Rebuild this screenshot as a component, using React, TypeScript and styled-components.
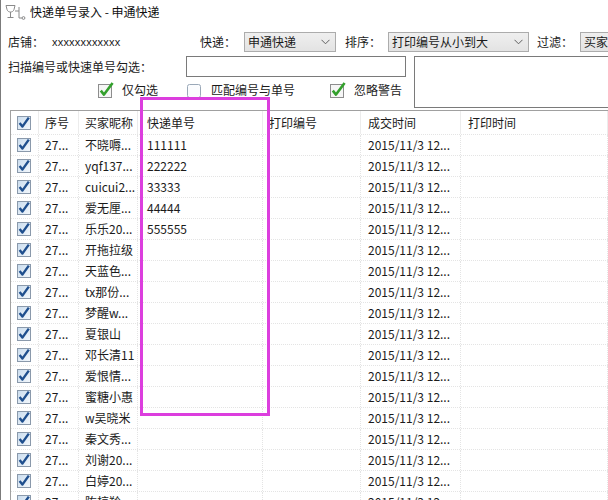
import React from 'react';
import styled, { createGlobalStyle } from 'styled-components';

const GlobalStyle = createGlobalStyle`
  html, body {
    margin: 0;
    padding: 0;
    background: #ffffff;
    overflow: hidden;
  }
  body {
    font-family: "Noto Sans CJK SC", "Microsoft YaHei", sans-serif;
    font-size: 12px;
    color: #1b1b1b;
  }
`;

// Window frame
const Window = styled.div`
  position: relative;
  width: 608px;
  height: 500px;
  box-sizing: border-box;
  border-left: 1px solid #7b7b7b;
  background: #ffffff;
  overflow: hidden;
  display: flex;
  flex-direction: column;
`;

const TitleBar = styled.div`
  height: 24px;
  flex-shrink: 0;
  padding: 0 0 0 2px;
  margin-bottom: 4px;
  display: flex;
  align-items: center;
  gap: 3px;
  font-size: 12px;
  color: #111;
`;

const TitleText = styled.span`
  line-height: 16px;
`;

// Form rows
const FormRow = styled.div`
  height: 28px;
  flex-shrink: 0;
  padding-left: 7px;
  display: flex;
  align-items: center;
  white-space: nowrap;
`;

const ShopGroup = styled.div`
  width: 192px;
  flex-shrink: 0;
  display: flex;
  align-items: center;
`;

const Label = styled.span<{ $width?: number }>`
  display: inline-block;
  flex-shrink: 0;
  width: ${p => (p.$width ? `${p.$width}px` : 'auto')};
  line-height: 16px;
`;

const ShopValue = styled.span`
  margin-left: 8px;
  font-family: "Liberation Sans", sans-serif;
  font-size: 11px;
  letter-spacing: 0.2px;
`;

const Select = styled.div<{ $width: number; $gap?: number }>`
  width: ${p => p.$width}px;
  margin-right: ${p => p.$gap ?? 0}px;
  flex-shrink: 0;
  height: 20px;
  box-sizing: border-box;
  border: 1px solid #acacac;
  background: linear-gradient(#efefef, #e3e3e3);
  display: flex;
  align-items: center;
  padding: 0 5px 0 3px;
  justify-content: space-between;
  line-height: 16px;
`;

const Chevron = styled.svg`
  width: 9px;
  height: 6px;
  flex-shrink: 0;
`;

const FormBody = styled.div`
  display: flex;
  height: 54px;
  flex-shrink: 0;
`;

const FormLeft = styled.div`
  width: 405px;
  flex-shrink: 0;
  padding-left: 7px;
  box-sizing: border-box;
  display: flex;
  flex-direction: column;
`;

const ScanRow = styled.div`
  display: flex;
  align-items: center;
  height: 21px;
`;

const ScanInput = styled.div`
  margin-left: 1px;
  width: 225px;
  height: 21px;
  box-sizing: border-box;
  border: 1px solid #7a7a7a;
  background: #fff;
`;

const OptionRow = styled.div`
  display: flex;
  align-items: center;
  height: 24px;
  margin-top: 1px;
  padding-left: 90px;
`;

const Option = styled.label<{ $width: number }>`
  width: ${p => p.$width}px;
  flex-shrink: 0;
  display: flex;
  align-items: center;
  gap: 8px;
  line-height: 16px;
`;

const MemoBox = styled.div`
  margin-left: 8px;
  flex: 1;
  height: 52px;
  margin-right: -4px;
  box-sizing: border-box;
  border: 1px solid #7a7a7a;
  background: #fff;
`;

// Table
const Table = styled.div`
  margin-left: 9px;
  flex: 1;
  border-top: 1px solid #a0a0a0;
  border-left: 1px solid #a0a0a0;
  background: #fff;
`;

const columns = '28px 40px 59px 125px 98px 100px 1fr';

const HeaderRow = styled.div`
  display: grid;
  grid-template-columns: ${columns};
  height: 23px;
`;

const HeaderCell = styled.div<{ $pad?: number }>`
  display: flex;
  align-items: center;
  padding-left: ${p => p.$pad ?? 6}px;
  border-right: 1px solid #ececec;
  line-height: 16px;
  overflow: hidden;
  white-space: nowrap;
`;

const BodyRow = styled.div`
  display: grid;
  grid-template-columns: ${columns};
  height: 21px;
  box-sizing: border-box;
  border-top: 1px dotted #e4e4e4;
`;

const Cell = styled.div<{ $pad?: number }>`
  display: flex;
  align-items: center;
  padding-left: ${p => p.$pad ?? 6}px;
  border-right: 1px dotted #e4e4e4;
  line-height: 16px;
  overflow: hidden;
  white-space: nowrap;
`;

// Annotation drawn over the screenshot
const Highlight = styled.div`
  position: absolute;
  left: 139px;
  top: 97px;
  width: 130px;
  height: 319px;
  box-sizing: border-box;
  border: 3px solid #dc3ede;
  pointer-events: none;
`;

const AppIcon = () => (
  <svg width="24" height="18" viewBox="0 0 24 18" fill="none" stroke="#8a8a8a" strokeWidth="1">
    <path d="M3 2.5 h9 l-1 4 c-0.5 1.8 -2 2.5 -3.5 2.5 c-1.5 0 -3 -0.7 -3.5 -2.5 z" />
    <path d="M7.5 9 v5" />
    <path d="M4.5 14.5 h6" />
    <path d="M12 8 h4 v7 h3" />
    <circle cx="20.5" cy="15" r="1.4" />
    <path d="M16 4 v4" />
  </svg>
);

const ChevronIcon = () => (
  <Chevron viewBox="0 0 9 6">
    <path d="M0.5 0.8 L4.5 4.8 L8.5 0.8" fill="none" stroke="#606060" strokeWidth="1" />
  </Chevron>
);

const GridCheck = () => (
  <svg width="14" height="14" viewBox="0 0 14 14">
    <defs>
      <linearGradient id="gcb" x1="0" y1="0" x2="1" y2="1">
        <stop offset="0" stopColor="#c9dcee" />
        <stop offset="1" stopColor="#f4f8fc" />
      </linearGradient>
    </defs>
    <rect x="0.5" y="0.5" width="13" height="13" fill="url(#gcb)" stroke="#8a99ab" />
    <path d="M2.6 7 L5.4 10.6 L11.8 1.6" fill="none" stroke="#1f4f8e" strokeWidth="2.4" strokeLinejoin="round" />
  </svg>
);

const GreenCheck = () => (
  <svg width="16" height="16" viewBox="0 0 16 16" style={{ overflow: 'visible' }}>
    <rect x="0.5" y="2.5" width="13" height="13" fill="#f6f6f6" stroke="#8d8d8d" />
    <path d="M2.8 8.6 L6 12.6 L14.6 1" fill="none" stroke="#33a02c" strokeWidth="2.6" strokeLinejoin="round" />
  </svg>
);

const EmptyCheck = () => (
  <svg width="16" height="16" viewBox="0 0 16 16">
    <rect x="0.5" y="2.5" width="13" height="13" rx="2" fill="#fbfcfe" stroke="#9aa8b8" />
  </svg>
);

interface Order {
  nick: string;
  express: string;
}

const orders: Order[] = [
  { nick: '不晓嗕...', express: '111111' },
  { nick: 'yqf137...', express: '222222' },
  { nick: 'cuicui2...', express: '33333' },
  { nick: '爱无厘...', express: '44444' },
  { nick: '乐乐20...', express: '555555' },
  { nick: '开拖拉级', express: '' },
  { nick: '天蓝色...', express: '' },
  { nick: 'tx那份...', express: '' },
  { nick: '梦醒w...', express: '' },
  { nick: '夏银山', express: '' },
  { nick: '邓长清11', express: '' },
  { nick: '爱恨情...', express: '' },
  { nick: '蜜糖小惠', express: '' },
  { nick: 'w吴晓米', express: '' },
  { nick: '秦文秀...', express: '' },
  { nick: '刘谢20...', express: '' },
  { nick: '白婷20...', express: '' },
  { nick: '陈椋羚...', express: '' },
];

const App: React.FC = () => {
  return (
    <>
      <GlobalStyle />
      <Window>
        <TitleBar>
          <AppIcon />
          <TitleText>快递单号录入 - 申通快递</TitleText>
        </TitleBar>

        <FormRow>
          <ShopGroup>
            <Label>店铺：</Label>
            <ShopValue>xxxxxxxxxxxx</ShopValue>
          </ShopGroup>
          <Label $width={44}>快递：</Label>
          <Select $width={92} $gap={9}>
            <span>申通快递</span>
            <ChevronIcon />
          </Select>
          <Label $width={43}>排序：</Label>
          <Select $width={141} $gap={8}>
            <span>打印编号从小到大</span>
            <ChevronIcon />
          </Select>
          <Label $width={43}>过滤：</Label>
          <Select $width={60}>
            <span>买家</span>
          </Select>
        </FormRow>

        <FormBody>
          <FormLeft>
            <ScanRow>
              <Label $width={177}>扫描编号或快速单号勾选：</Label>
              <ScanInput />
            </ScanRow>
            <OptionRow>
              <Option $width={89}>
                <GreenCheck />
                <span>仅勾选</span>
              </Option>
              <Option $width={143}>
                <EmptyCheck />
                <span>匹配编号与单号</span>
              </Option>
              <Option $width={90}>
                <GreenCheck />
                <span>忽略警告</span>
              </Option>
            </OptionRow>
          </FormLeft>
          <MemoBox />
        </FormBody>

        <Table>
          <HeaderRow>
            <HeaderCell $pad={6}>
              <GridCheck />
            </HeaderCell>
            <HeaderCell>序号</HeaderCell>
            <HeaderCell>买家昵称</HeaderCell>
            <HeaderCell $pad={9}>快递单号</HeaderCell>
            <HeaderCell>打印编号</HeaderCell>
            <HeaderCell $pad={7}>成交时间</HeaderCell>
            <HeaderCell $pad={7}>打印时间</HeaderCell>
          </HeaderRow>
          {orders.map((o, i) => (
            <BodyRow key={i}>
              <Cell $pad={6}>
                <GridCheck />
              </Cell>
              <Cell>27...</Cell>
              <Cell>{o.nick}</Cell>
              <Cell $pad={9}>{o.express}</Cell>
              <Cell />
              <Cell $pad={7}>2015/11/3 12...</Cell>
              <Cell />
            </BodyRow>
          ))}
        </Table>

        <Highlight />
      </Window>
    </>
  );
};

export default App;
